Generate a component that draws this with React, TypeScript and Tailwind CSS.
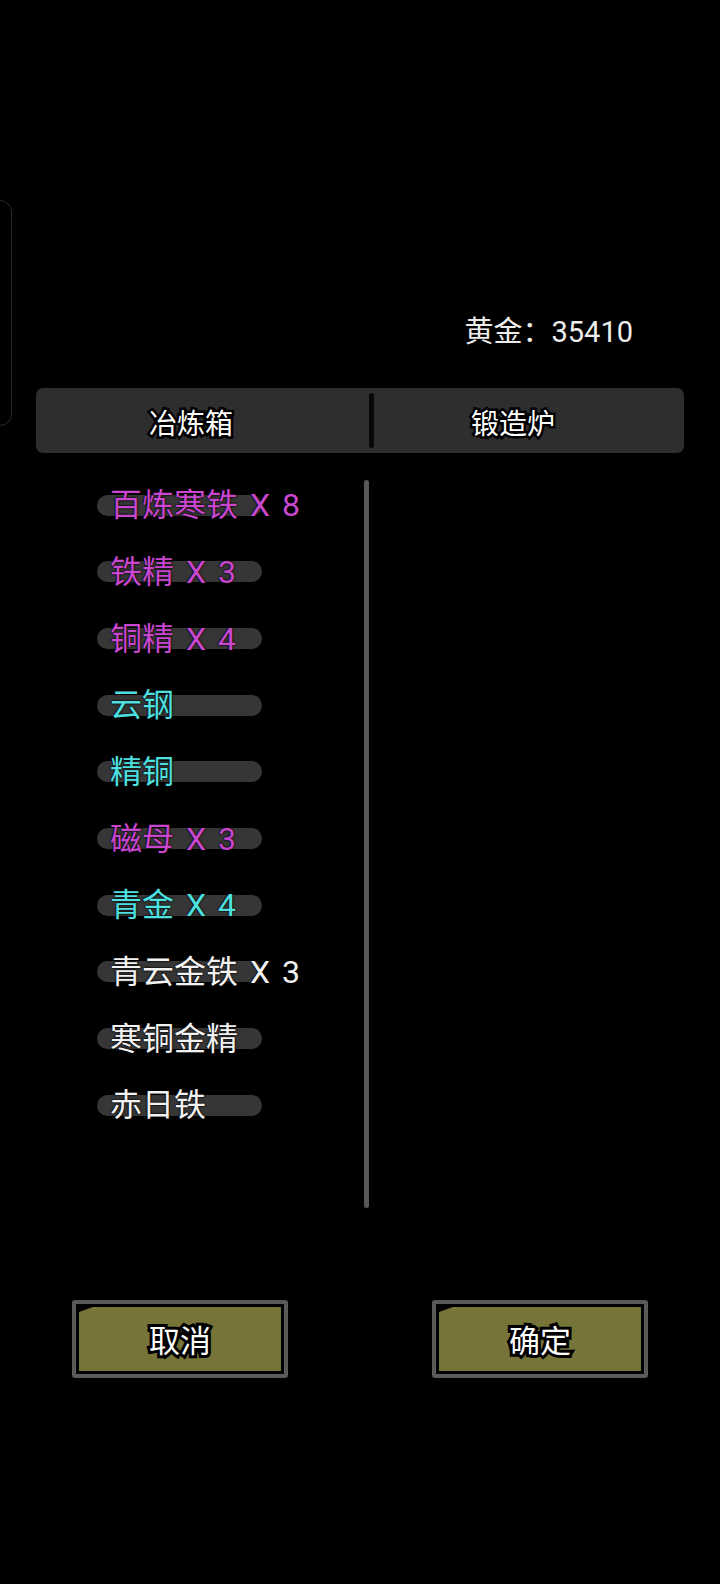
const items: { t: string; c: string }[] = [
  { t: "百炼寒铁 X 8", c: "text-[#c946cf]" },
  { t: "铁精 X 3", c: "text-[#c946cf]" },
  { t: "铜精 X 4", c: "text-[#c946cf]" },
  { t: "云钢", c: "text-[#4ee0e0]" },
  { t: "精铜", c: "text-[#4ee0e0]" },
  { t: "磁母 X 3", c: "text-[#c946cf]" },
  { t: "青金 X 4", c: "text-[#4ee0e0]" },
  { t: "青云金铁 X 3", c: "text-[#f2f2f2]" },
  { t: "寒铜金精", c: "text-[#f2f2f2]" },
  { t: "赤日铁", c: "text-[#f2f2f2]" },
];

function GameButton({ label, className }: { label: string; className: string }) {
  return (
    <div className={`w-[216px] h-[78px] border-[4px] border-[#5a5a5a] rounded-[3px] bg-black p-[3px] ${className}`}>
      <div className="h-full bg-[#767439] flex items-center justify-center pt-[4px] [clip-path:polygon(14px_0,100%_0,100%_100%,0_100%,0_5px)]">
        <span className="text-[31px] leading-none text-white [-webkit-text-stroke:6px_#000] [paint-order:stroke_fill]">
          {label}
        </span>
      </div>
    </div>
  );
}

export default function App() {
  return (
    <div className="relative w-[720px] h-[1584px] bg-black overflow-hidden font-['Roboto','Noto_Sans_CJK_SC',sans-serif]">
      <div className="absolute left-[-20px] top-[200px] w-[32px] h-[226px] rounded-[12px] border border-[#2a2a2a]" />

      <div className="flex justify-end pt-[314px] pr-[87px] h-[350px] text-[29px] leading-[36px] text-[#ececec]">
        黄金：35410
      </div>

      <div className="mx-[36px] mt-[38px] h-[65px] rounded-[7px] bg-[#2e2e2e] flex items-center">
        <span className="w-[310px] text-center pt-[8px] text-[28px] leading-none text-white [-webkit-text-stroke:5px_#000] [paint-order:stroke_fill]">
          冶炼箱
        </span>
        <div className="ml-[23px] w-[5px] h-[55px] rounded-full bg-[#080808]" />
        <span className="w-[278px] text-center pt-[8px] text-[28px] leading-none text-white [-webkit-text-stroke:5px_#000] [paint-order:stroke_fill]">
          锻造炉
        </span>
      </div>

      <div className="flex mt-[19px]">
        <div className="w-[364px] flex flex-col">
          {items.map((it) => (
            <div key={it.t} className="grid h-[66.67px] items-center">
              <div className="col-start-1 row-start-1 ml-[97px] w-[165px] h-[21px] rounded-full bg-[#363636]" />
              <span
                className={`col-start-1 row-start-1 pl-[110px] text-[32px] leading-none whitespace-nowrap [word-spacing:4px] [text-shadow:0_0_2px_#000,0_0_2px_#000] ${it.c}`}
              >
                {it.t}
              </span>
            </div>
          ))}
        </div>
        <div className="mt-[8px] w-[5px] h-[728px] rounded-full bg-[#575757]" />
      </div>

      <div className="flex mt-[92px]">
        <GameButton label="取消" className="ml-[72px]" />
        <GameButton label="确定" className="ml-[144px]" />
      </div>
    </div>
  );
}
